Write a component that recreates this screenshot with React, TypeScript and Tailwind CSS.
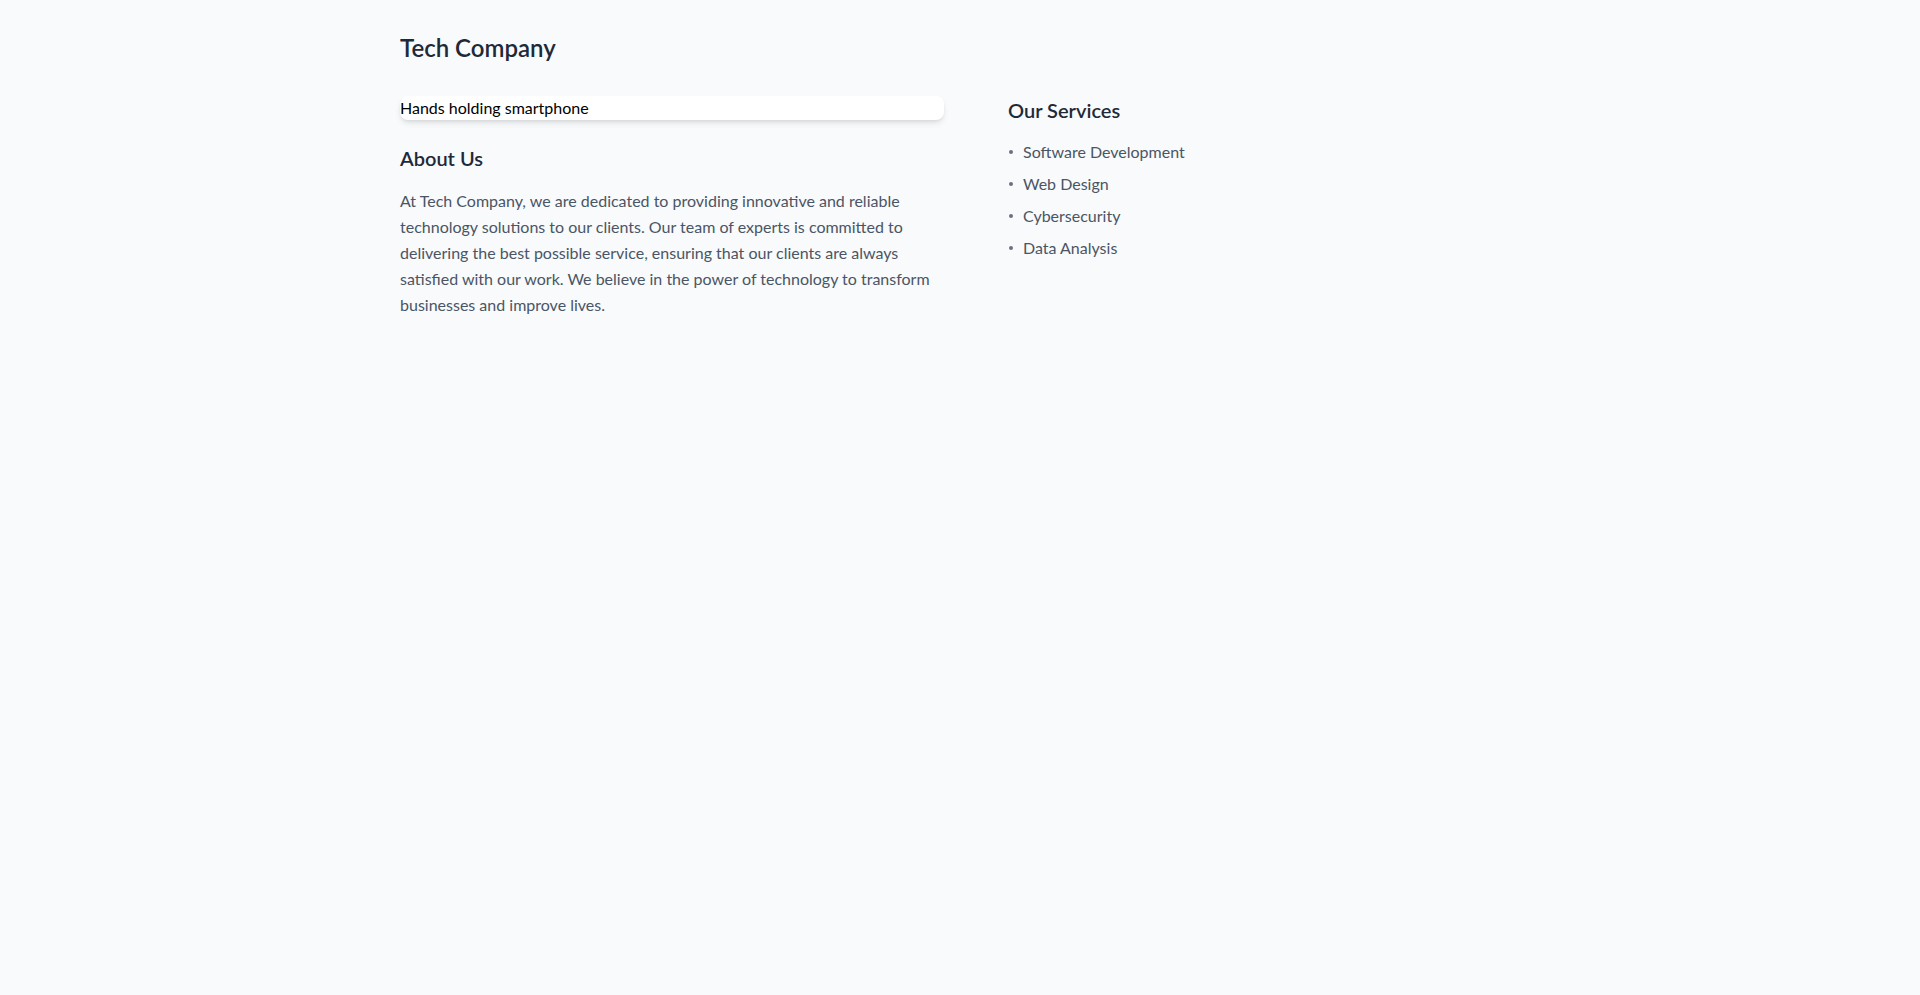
const services = ['Software Development', 'Web Design', 'Cybersecurity', 'Data Analysis']

export default function App() {
  return (
    <div className="min-h-screen bg-gray-50 font-['Lato',sans-serif]">
      <div className="max-w-6xl mx-auto px-4 py-8">
        <h1 className="text-2xl font-semibold text-gray-800 mb-8">Tech Company</h1>

        <div className="grid grid-cols-2 gap-8">
          <div>
            <div className="bg-white rounded-lg shadow-md overflow-hidden mb-6">
              <p className="text-base leading-6 text-black">Hands holding smartphone</p>
            </div>
            <h2 className="text-xl font-semibold text-gray-800 mb-4">About Us</h2>
            <p className="text-gray-600 leading-relaxed">
              At Tech Company, we are dedicated to providing innovative and reliable technology solutions to our
              clients. Our team of experts is committed to delivering the best possible service, ensuring that our
              clients are always satisfied with our work. We believe in the power of technology to transform
              businesses and improve lives.
            </p>
          </div>

          <div className="pl-8">
            <h2 className="text-xl font-semibold text-gray-800 mb-4">Our Services</h2>
            <ul className="space-y-2 text-gray-600">
              {services.map((s) => (
                <li key={s} className="flex items-center">
                  <span className="ml-px mr-[10px] w-1 h-1 shrink-0 rounded-full bg-gray-500" />
                  <span>{s}</span>
                </li>
              ))}
            </ul>
          </div>
        </div>
      </div>
    </div>
  )
}
